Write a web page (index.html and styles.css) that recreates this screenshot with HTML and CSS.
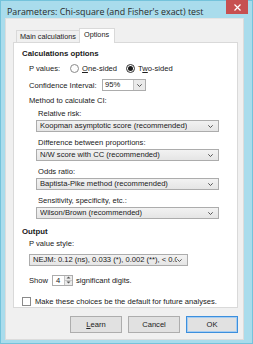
FILE: index.html
```html
<!DOCTYPE html>
<html>
<head>
<meta charset="utf-8">
<link rel="stylesheet" href="styles.css">
</head>
<body>
<div class="window">
  <div class="titlebar">
    <span class="title">Parameters: Chi-square (and Fisher's exact) test</span>
    <span class="close">
      <svg width="7" height="7" viewBox="0 0 7 7"><path d="M0.5 0.5L6.5 6.5M6.5 0.5L0.5 6.5" stroke="#fff" stroke-width="1.2"/></svg>
    </span>
  </div>
  <div class="client">
    <div class="tabs">
      <div class="tab">Main calculations</div>
      <div class="tab active">Options</div>
    </div>
    <div class="panel">
      <div class="heading">Calculations options</div>
      <div class="row pvals">
        <span class="lbl">P values:</span>
        <span class="radio"></span><span class="rlbl"><u>O</u>ne-sided</span>
        <span class="radio on"></span><span class="rlbl">T<u>w</u>o-sided</span>
      </div>
      <div class="row ci">
        <span class="lbl">Confidence Interval:</span>
        <span class="editcombo"><span class="edit">95%</span><span class="abtn"><svg width="5" height="3" viewBox="0 0 5 3"><path d="M0.3 0.3L2.5 2.5L4.7 0.3" fill="none" stroke="#444" stroke-width="0.9"/></svg></span></span>
      </div>
      <div class="label mcl">Method to calculate CI:</div>
      <div class="group">
        <div class="label sub">Relative risk:</div>
        <div class="combo"><span class="ctext">Koopman asymptotic score (recommended)</span><svg width="5" height="3" viewBox="0 0 5 3"><path d="M0.3 0.3L2.5 2.5L4.7 0.3" fill="none" stroke="#444" stroke-width="0.9"/></svg></div>
        <div class="label sub">Difference between proportions:</div>
        <div class="combo"><span class="ctext">N/W score with CC (recommended)</span><svg width="5" height="3" viewBox="0 0 5 3"><path d="M0.3 0.3L2.5 2.5L4.7 0.3" fill="none" stroke="#444" stroke-width="0.9"/></svg></div>
        <div class="label sub">Odds ratio:</div>
        <div class="combo"><span class="ctext">Baptista-Pike method (recommended)</span><svg width="5" height="3" viewBox="0 0 5 3"><path d="M0.3 0.3L2.5 2.5L4.7 0.3" fill="none" stroke="#444" stroke-width="0.9"/></svg></div>
        <div class="label sub">Sensitivity, specificity, etc.:</div>
        <div class="combo"><span class="ctext">Wilson/Brown (recommended)</span><svg width="5" height="3" viewBox="0 0 5 3"><path d="M0.3 0.3L2.5 2.5L4.7 0.3" fill="none" stroke="#444" stroke-width="0.9"/></svg></div>
      </div>
      <div class="heading out">Output</div>
      <div class="label pvs">P value style:</div>
      <div class="combo nejm"><span class="ctext">NEJM: 0.12 (ns), 0.033 (*), 0.002 (**), &lt; 0.0</span><svg width="5" height="3" viewBox="0 0 5 3"><path d="M0.3 0.3L2.5 2.5L4.7 0.3" fill="none" stroke="#444" stroke-width="0.9"/></svg></div>
      <div class="row show">
        <span class="lbl">Show</span>
        <span class="spin"><span class="sval">4</span><span class="sbtns"><span class="sb"><svg width="5" height="3" viewBox="0 0 5 3"><path d="M0.5 2.6L2.5 0.4L4.5 2.6Z" fill="#555"/></svg></span><span class="sb"><svg width="5" height="3" viewBox="0 0 5 3"><path d="M0.5 0.4L2.5 2.6L4.5 0.4Z" fill="#555"/></svg></span></span></span>
        <span class="lbl">significant digits.</span>
      </div>
      <div class="row chk">
        <span class="cbox"></span>
        <span class="lbl">Make these choices be the default for future analyses.</span>
      </div>
    </div>
    <div class="buttons">
      <div class="btn"><u>L</u>earn</div>
      <div class="btn">Cancel</div>
      <div class="btn def">OK</div>
    </div>
  </div>
</div>
</body>
</html>
```

FILE: styles.css
```css
* { box-sizing: border-box; }
html, body { margin: 0; padding: 0; }
body {
  width: 253px;
  height: 344px;
  overflow: hidden;
  font-family: "Liberation Sans", Arial, sans-serif;
  font-size: 7.6px;
  color: #202020;
}
u { text-decoration: underline; text-underline-offset: 1px; }
.window {
  width: 253px;
  height: 344px;
  background: #a9dcec;
  border: 1px solid #74c3db;
  display: flex;
  flex-direction: column;
}
.titlebar {
  height: 19px;
  display: flex;
  align-items: flex-start;
  justify-content: space-between;
}
.title {
  font-family: "Open Sans", "Noto Sans", sans-serif;
  font-size: 8.9px;
  color: #2a2a2a;
  padding: 4px 0 0 6px;
}
.close {
  width: 22px;
  height: 14px;
  margin: -1px 4px 0 0;
  background: #c75050;
  display: flex;
  align-items: center;
  justify-content: center;
}
.client {
  flex: 1;
  margin: 0 8px 3px 4px;
  background: #f0f0f0;
  border: 1px solid #dcdcdc;
  border-top: 1px solid #e4e4e4;
  display: flex;
  flex-direction: column;
  padding: 0 5px 6px 7px;
}
.tabs {
  display: flex;
  align-items: flex-end;
  margin: 8px 0 0 3px;
  height: 15px;
  position: relative;
  z-index: 1;
}
.tab {
  height: 12px;
  padding: 0 3px;
  line-height: 11px;
  border: 1px solid #d9d9d9;
  border-bottom: none;
  background: #f0f0f0;
  font-size: 7.3px;
}
.tab.active {
  height: 15px;
  background: #fff;
  margin-left: -1px;
  padding: 0 5px 0 4px;
  line-height: 12px;
  margin-bottom: -1px;
}
.panel {
  height: 266px;
  background: #fff;
  border: 1px solid #d9d9d9;
  padding: 6px 0 0 8px;
  display: flex;
  flex-direction: column;
  align-items: flex-start;
}
.heading {
  font-weight: bold;
  font-size: 7.8px;
  line-height: 10px;
  height: 10px;
}
.row {
  display: flex;
  align-items: center;
}
.pvals { margin: 3px 0 0 7px; height: 12px; }
.pvals .lbl { width: 41px; }
.radio {
  width: 9px;
  height: 9px;
  border-radius: 50%;
  border: 1px solid #8a8a8a;
  background: #fdfdfd;
  margin-right: 3px;
  display: flex;
  align-items: center;
  justify-content: center;
}
.radio.on { border-color: #333; }
.radio.on::after {
  content: "";
  width: 5px;
  height: 5px;
  border-radius: 50%;
  background: #1b1b1b;
}
.rlbl { margin-right: 9px; }
.ci { margin: 5px 0 0 7px; height: 12px; }
.ci .lbl { width: 73px; }
.editcombo {
  display: flex;
  height: 12px;
  width: 44px;
  border: 1px solid #acacac;
  background: #fff;
}
.edit { flex: 1; padding-left: 2px; line-height: 10px; }
.abtn {
  width: 12px;
  background: #eaeaea;
  border-left: 1px solid #c4c4c4;
  display: flex;
  align-items: center;
  justify-content: center;
}
.label { line-height: 10px; height: 10px; }
.mcl { margin: 5px 0 0 7px; }
.group { display: flex; flex-direction: column; align-items: flex-start; margin: 3px 0 0 14px; }
.sub { margin-left: 2px; }
.combo {
  width: 183px;
  height: 12px;
  margin: 1px 0 6px 0;
  border: 1px solid #acacac;
  background: linear-gradient(#f2f2f2, #e5e5e5);
  display: flex;
  align-items: center;
  justify-content: space-between;
  padding: 0 5px 0 3px;
}
.group .combo:last-child { margin-bottom: 0; }
.ctext { line-height: 10px; white-space: nowrap; overflow: hidden; }
.out { margin-top: 8px; }
.pvs { margin: 2px 0 0 7px; }
.nejm { width: 159px; margin: 5px 0 0 7px; }
.show { margin: 8px 0 0 7px; height: 12px; }
.spin {
  display: flex;
  width: 21px;
  height: 11px;
  border: 1px solid #acacac;
  background: #fff;
  margin: 0 3px 0 4px;
}
.sval { flex: 1; padding-left: 3px; line-height: 9px; }
.sbtns { width: 8px; display: flex; flex-direction: column; border-left: 1px solid #c4c4c4; }
.sb { flex: 1; background: #ececec; display: flex; align-items: center; justify-content: center; }
.sb + .sb { border-top: 1px solid #c8c8c8; }
.chk { margin: 10px 0 0 0; height: 10px; }
.cbox {
  width: 9px;
  height: 9px;
  border: 1px solid #8a8a8a;
  background: #fff;
  margin-right: 4px;
}
.buttons {
  display: flex;
  justify-content: flex-end;
  gap: 6px;
  margin-top: 8px;
}
.btn {
  width: 52px;
  height: 17px;
  border: 1px solid #adadad;
  background: #e1e1e1;
  display: flex;
  align-items: center;
  justify-content: center;
}
.btn.def { border-color: #3c8fdd; box-shadow: inset 0 0 0 1px #a6cdf2; }
```
